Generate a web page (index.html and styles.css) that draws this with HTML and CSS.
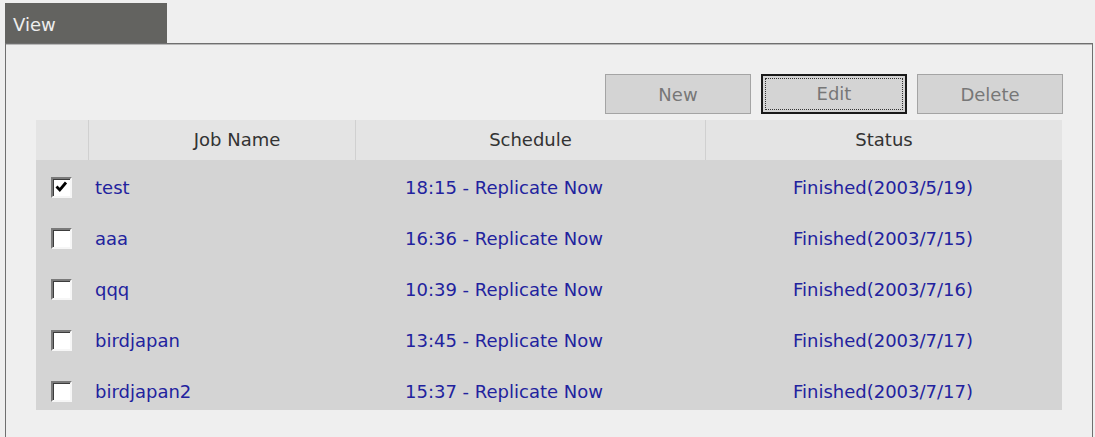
FILE: index.html
```html
<!DOCTYPE html>
<html lang="en">
<head>
    <meta charset="UTF-8">
    <title>Replication Jobs</title>
    <link rel="stylesheet" href="styles.css">
</head>
<body>

    <div class="tab">View</div>

    <div class="panel">
        <div class="toolbar">
            <button class="btn">New</button>
            <button class="btn focused"><span>Edit</span></button>
            <button class="btn">Delete</button>
        </div>

        <div class="jobs">
            <div class="head">
                <div class="hcell"></div>
                <div class="hcell name-head">Job Name</div>
                <div class="hcell">Schedule</div>
                <div class="hcell">Status</div>
            </div>
            <div class="rows">
                <div class="row">
                    <span class="check">
                        <svg width="17" height="17" viewBox="0 0 17 17"><path d="M3.5 7.5 L6.8 11 L13 3.5" fill="none" stroke="#000" stroke-width="2.8"/></svg>
                    </span>
                    <span class="name">test</span>
                    <span class="sched">18:15 - Replicate Now</span>
                    <span class="status">Finished(2003/5/19)</span>
                </div>
                <div class="row">
                    <span class="check"></span>
                    <span class="name">aaa</span>
                    <span class="sched">16:36 - Replicate Now</span>
                    <span class="status">Finished(2003/7/15)</span>
                </div>
                <div class="row">
                    <span class="check"></span>
                    <span class="name">qqq</span>
                    <span class="sched">10:39 - Replicate Now</span>
                    <span class="status">Finished(2003/7/16)</span>
                </div>
                <div class="row">
                    <span class="check"></span>
                    <span class="name">birdjapan</span>
                    <span class="sched">13:45 - Replicate Now</span>
                    <span class="status">Finished(2003/7/17)</span>
                </div>
                <div class="row">
                    <span class="check"></span>
                    <span class="name">birdjapan2</span>
                    <span class="sched">15:37 - Replicate Now</span>
                    <span class="status">Finished(2003/7/17)</span>
                </div>
            </div>
        </div>
    </div>

</body>
</html>
```

FILE: styles.css
```css
* {
    box-sizing: border-box;
}
body {
    margin: 0;
    background: #efefef;
    font-family: "DejaVu Sans", sans-serif;
    font-size: 18px;
    height: 437px;
    overflow: hidden;
}
.tab {
    margin: 3px 0 0 5px;
    width: 162px;
    height: 40px;
    padding: 2px 0 0 8px;
    line-height: 40px;
    background: #636360;
    color: #eeeeee;
}
.panel {
    margin-left: 5px;
    width: 1088px;
    height: 394px;
    border: 1px solid #6f6f6f;
    border-bottom: none;
    box-shadow: inset 0 1px 0 #b8b8b8;
    padding: 30px 29px 0 30px;
}
.toolbar {
    display: flex;
    justify-content: flex-end;
    gap: 10px;
    margin-bottom: 6px;
}
.btn {
    width: 146px;
    height: 40px;
    background: #d4d4d4;
    border: 1px solid #a4a4a4;
    color: #777777;
    font-family: "DejaVu Sans", sans-serif;
    font-size: 18px;
    padding: 0;
}
.btn.focused {
    border: 2px solid #1a1a1a;
    padding: 2px;
}
.btn.focused span {
    display: block;
    height: 100%;
    line-height: 30px;
    border: 1px dotted #333;
}
.jobs {
    width: 1026px;
    background: #d4d4d4;
}
.head {
    display: grid;
    grid-template-columns: 52px 267px 350px 357px;
    height: 40px;
    background: #e4e4e4;
}
.hcell {
    line-height: 40px;
    text-align: center;
    color: #333333;
    border-left: 1px solid #d0d0d0;
}
.hcell:first-child {
    border-left: none;
}
.name-head {
    padding-left: 30px;
}
.rows {
    display: flex;
    flex-direction: column;
    gap: 25px;
    padding: 14px 0 6px;
}
.row {
    display: grid;
    grid-template-columns: 59px 310px 299px 358px;
    height: 26px;
    align-items: center;
    color: #22229e;
}
.check {
    margin-left: 15px;
    width: 21px;
    height: 21px;
    background: #ffffff;
    border: 2px solid;
    border-color: #7a7a7a #f6f6f6 #f6f6f6 #7a7a7a;
    box-shadow: inset 1px 1px 0 #3c3c3c;
}
.check svg {
    display: block;
}
.status {
    text-align: center;
}
```
